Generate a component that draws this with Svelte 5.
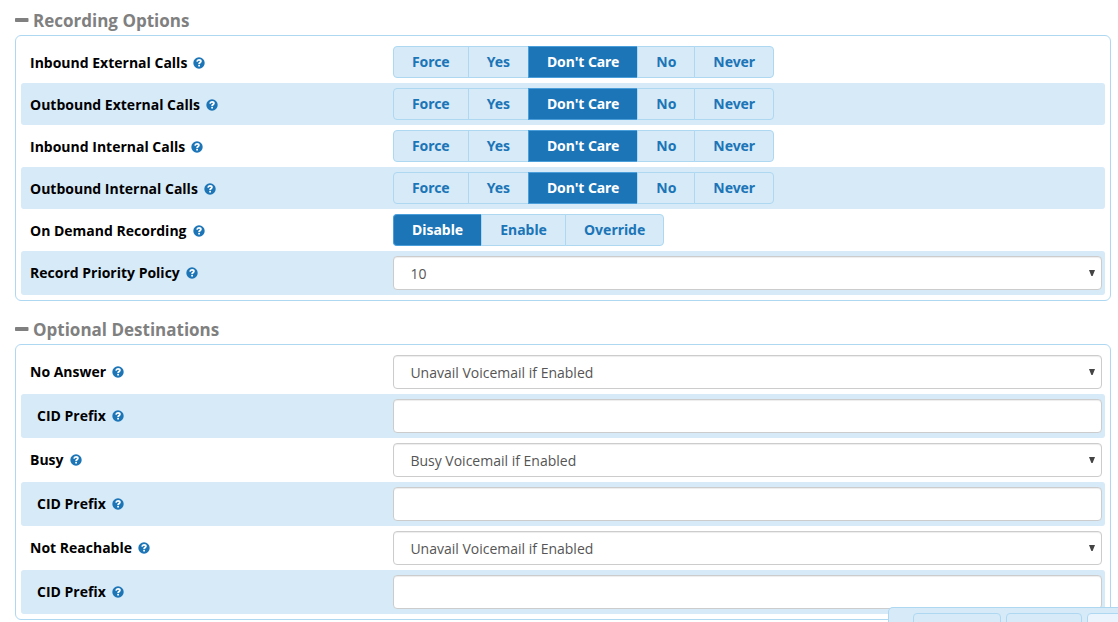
<script lang="ts">
  type Row = {
    label: string;
    kind: 'radio' | 'select' | 'text';
    value: string;
    options?: string[];
    nested?: boolean;
  };

  const recordChoices = ['Force', 'Yes', "Don't Care", 'No', 'Never'];

  let sections: { title: string; open: boolean; rows: Row[] }[] = $state([
    {
      title: 'Recording Options',
      open: true,
      rows: [
        { label: 'Inbound External Calls', kind: 'radio', value: "Don't Care", options: recordChoices },
        { label: 'Outbound External Calls', kind: 'radio', value: "Don't Care", options: recordChoices },
        { label: 'Inbound Internal Calls', kind: 'radio', value: "Don't Care", options: recordChoices },
        { label: 'Outbound Internal Calls', kind: 'radio', value: "Don't Care", options: recordChoices },
        { label: 'On Demand Recording', kind: 'radio', value: 'Disable', options: ['Disable', 'Enable', 'Override'] },
        { label: 'Record Priority Policy', kind: 'select', value: '10', options: ['10'] }
      ]
    },
    {
      title: 'Optional Destinations',
      open: true,
      rows: [
        { label: 'No Answer', kind: 'select', value: 'Unavail Voicemail if Enabled', options: ['Unavail Voicemail if Enabled'] },
        { label: 'CID Prefix', kind: 'text', value: '', nested: true },
        { label: 'Busy', kind: 'select', value: 'Busy Voicemail if Enabled', options: ['Busy Voicemail if Enabled'] },
        { label: 'CID Prefix', kind: 'text', value: '', nested: true },
        { label: 'Not Reachable', kind: 'select', value: 'Unavail Voicemail if Enabled', options: ['Unavail Voicemail if Enabled'] },
        { label: 'CID Prefix', kind: 'text', value: '', nested: true }
      ]
    }
  ]);
</script>

<div class="page">
  {#each sections as section}
    <section>
      <h3>
        <button class="section-title" onclick={() => (section.open = !section.open)}>
          <svg width="14" height="14" viewBox="0 0 14 14">
            <rect x="0" y="5" width="13.5" height="4" rx="0.8" />
            {#if !section.open}
              <rect x="4.7" y="0.2" width="4" height="13.5" rx="0.8" />
            {/if}
          </svg>
          <span>{section.title}</span>
        </button>
      </h3>
      {#if section.open}
        <div class="section">
          {#each section.rows as row}
            <div class="element">
              <div class="label" class:nested={row.nested} class:beside-radio={row.kind === 'radio'}>
                <span>{row.label}</span>
                <svg class="help" width="12" height="12" viewBox="0 0 12 12">
                  <circle cx="6" cy="6" r="5.7" />
                  <path d="M4 4.6C4.2 3.4 5 2.8 6 2.8c1.1 0 1.9.6 1.9 1.5C7.9 5.5 6.1 5.5 6.1 7" />
                  <rect x="5.2" y="7.8" width="1.8" height="1.7" />
                </svg>
              </div>
              <div class="control">
                {#if row.kind === 'radio'}
                  <div class="radioset" class:tight={(row.options?.length ?? 0) > 3}>
                    {#each row.options ?? [] as option}
                      <button class:active={row.value === option} onclick={() => (row.value = option)}>{option}</button>
                    {/each}
                  </div>
                {:else if row.kind === 'select'}
                  <div class="select">
                    <select class="form-control" aria-label={row.label} bind:value={row.value}>
                      {#each row.options ?? [] as option}
                        <option>{option}</option>
                      {/each}
                    </select>
                    <svg class="arrow" width="6" height="6" viewBox="0 0 6 6"><path d="M0 0h6L3.6 6H2.4z" /></svg>
                  </div>
                {:else}
                  <input class="form-control" type="text" aria-label={row.label} bind:value={row.value} />
                {/if}
              </div>
            </div>
          {/each}
        </div>
      {/if}
    </section>
  {/each}
</div>

<div class="action-bar">
  <div class="action submit"></div>
  <div class="action reset"></div>
  <div class="action toggle"></div>
</div>

<style>
  :global(body) {
    overflow: hidden;
    background: #fff;
  }

  .page {
    box-sizing: border-box;
    height: 622px;
    padding: 6px 7px 0 15px;
    overflow: hidden;
    font-family: 'Open Sans', sans-serif;
    font-size: 14px;
    color: #000;
  }

  section {
    margin-bottom: 14px;
  }

  h3 {
    margin: 0;
    height: 29px;
  }

  .section-title {
    display: flex;
    align-items: center;
    gap: 4px;
    height: 28px;
    padding: 0;
    border: 0;
    background: none;
    font: 700 17px 'Open Sans', sans-serif;
    color: #808080;
    cursor: pointer;
  }

  .section-title svg {
    fill: #808080;
  }

  .section {
    padding: 5px;
    border: 1px solid #aed8f2;
    border-radius: 6px;
  }

  .element {
    display: grid;
    grid-template-columns: 372px 1fr;
    align-items: center;
    padding: 5px 3px 5px 0;
    border-radius: 3px;
  }

  .element:nth-child(even) {
    background: #d7eaf8;
  }

  .label {
    display: flex;
    align-items: center;
    gap: 6px;
    padding-left: 9px;
    font-weight: 700;
    line-height: 20px;
  }

  .label.nested {
    padding-left: 16px;
  }

  .label.beside-radio {
    padding-top: 2px;
  }

  .help {
    fill: #1b75b6;
  }

  .help path {
    fill: none;
    stroke: #fff;
    stroke-width: 1.8;
  }

  .help rect {
    fill: #fff;
  }

  .radioset {
    display: flex;
  }

  .radioset button {
    height: 32px;
    box-sizing: border-box;
    padding: 0 18px 2px;
    border: 1px solid #aed8f2;
    margin-right: -1px;
    background: #d7eaf8;
    font: 700 14px 'Noto Sans', sans-serif;
    color: #1b75b6;
    cursor: pointer;
  }

  .radioset.tight button {
    letter-spacing: -0.07px;
  }

  .radioset button:first-child {
    border-radius: 4px 0 0 4px;
  }

  .radioset button:last-child {
    border-radius: 0 4px 4px 0;
  }

  .radioset button.active {
    border-color: #4a9fdb;
    border-right-color: #1b75b6;
    background: #1b75b6;
    color: #fff;
  }

  .select {
    position: relative;
  }

  .form-control {
    display: block;
    box-sizing: border-box;
    width: 100%;
    height: 34px;
    padding: 0 16.4px;
    border: 1px solid #ccc;
    border-radius: 4px;
    background: #fff;
    box-shadow: inset 0 1px 1px rgba(0, 0, 0, 0.075);
    appearance: none;
    font: 14px 'Open Sans', sans-serif;
    color: #555;
  }

  .arrow {
    position: absolute;
    top: 14px;
    right: 7px;
    fill: #444;
    pointer-events: none;
  }

  .action-bar {
    position: fixed;
    left: 888px;
    right: 0;
    bottom: 0;
    display: flex;
    gap: 5px;
    box-sizing: border-box;
    height: 15px;
    padding: 5px 0 0 24px;
    border: solid #aed8f2;
    border-width: 1px 0 0 1px;
    border-radius: 5px 0 0 0;
    background: #d7eaf8;
    overflow: hidden;
  }

  .action {
    flex: none;
    box-sizing: border-box;
    height: 32px;
    border: 1px solid #aed8f2;
    border-radius: 4px;
  }

  .submit {
    width: 88px;
  }

  .reset {
    width: 76px;
  }

  .toggle {
    width: 60px;
    background: #ebf4fc;
  }
</style>
